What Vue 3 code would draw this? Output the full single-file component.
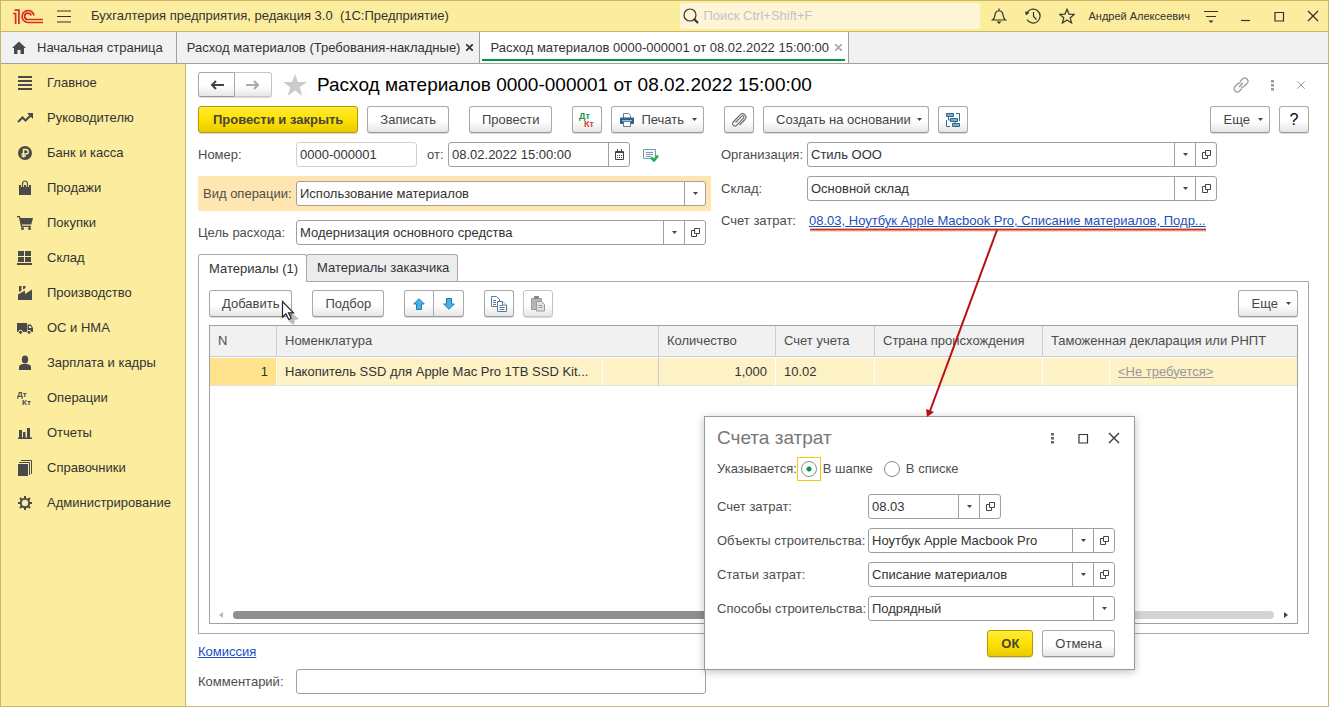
<script setup>
import { ref } from 'vue'

const sections = [
  { icon: 'list', title: 'Главное' },
  { icon: 'trend', title: 'Руководителю' },
  { icon: 'ruble', title: 'Банк и касса' },
  { icon: 'bag', title: 'Продажи' },
  { icon: 'cart', title: 'Покупки' },
  { icon: 'stock', title: 'Склад' },
  { icon: 'factory', title: 'Производство' },
  { icon: 'truck', title: 'ОС и НМА' },
  { icon: 'person', title: 'Зарплата и кадры' },
  { icon: 'dtkt', title: 'Операции' },
  { icon: 'chart', title: 'Отчеты' },
  { icon: 'books', title: 'Справочники' },
  { icon: 'gear', title: 'Администрирование' }
]

const number = ref('0000-000001')
const date = ref('08.02.2022 15:00:00')
const operation = ref('Использование материалов')
const purpose = ref('Модернизация основного средства')
const organization = ref('Стиль ООО')
const warehouse = ref('Основной склад')
const comment = ref('')
const place = ref('header')
const method = ref('Подрядный')

const costFields = ref([
  { id: 'cost-account', label: 'Счет затрат:', value: '08.03', short: true },
  { id: 'cost-object', label: 'Объекты строительства:', value: 'Ноутбук Apple Macbook Pro' },
  { id: 'cost-item', label: 'Статьи затрат:', value: 'Списание материалов' }
])
</script>

<template>
  <div class="window">
    <svg class="sprite" aria-hidden="true">
      <symbol id="i-list" viewBox="0 0 16 16"><path fill="currentColor" d="M1 1h14v2H1zM1 5h14v2H1zM1 9h14v2H1zM1 13h14v2H1z" /></symbol>
      <symbol id="i-trend" viewBox="0 0 16 16"><path fill="none" stroke="currentColor" stroke-width="2" d="M1 12l4.500-4.500L8.500 10.500 14 5" /><path fill="currentColor" d="M10 3h6v6z" /></symbol>
      <symbol id="i-ruble" viewBox="0 0 16 16"><circle cx="8" cy="8" r="7" fill="currentColor" /><path fill="none" stroke="#fbec9e" stroke-width="1.500" d="M6.500 12.500V4.500H9a2.200 2.200 0 0 1 0 4.500H4.500M4.500 11H9" /></symbol>
      <symbol id="i-bag" viewBox="0 0 16 16"><path fill="currentColor" d="M2 5h12v10H2z" /><path fill="none" stroke="#fbec9e" stroke-width="3" d="M5.500 7V4a2.500 3 0 0 1 5 0v3" /><path fill="none" stroke="currentColor" stroke-width="1.200" d="M5.500 7V4a2.500 3 0 0 1 5 0v3" /></symbol>
      <symbol id="i-cart" viewBox="0 0 16 16"><path fill="none" stroke="currentColor" stroke-width="1.300" d="M0 1.700h2.500l2 9.600h9.500" /><path fill="currentColor" d="M3 3h13l-1.700 6.500H4.300z" /><circle cx="5.500" cy="13.500" r="1.500" fill="currentColor" /><circle cx="12.500" cy="13.500" r="1.500" fill="currentColor" /></symbol>
      <symbol id="i-stock" viewBox="0 0 16 16"><path fill="currentColor" d="M1 1h6v5H1zM8 1h6v5H8zM1 7h6v5H1zM8 7h6v5H8zM0 13h15v2H0z" /></symbol>
      <symbol id="i-factory" viewBox="0 0 16 16"><path fill="currentColor" d="M1 15V9.500L8 5.500V9l7-4.500V15zM2 1h2.500v4.500L2 7zM6 1h2.500v2L6 4.500z" /></symbol>
      <symbol id="i-truck" viewBox="0 0 16 16"><path fill="currentColor" d="M0 3h10v9H0zM10.500 4.500H14L16 8v4h-5.500z" /><path fill="#fbec9e" d="M12 6h1.700l1 2H12z" /><g fill="currentColor" stroke="#fbec9e"><circle cx="3.500" cy="12.300" r="2" /><circle cx="12" cy="12.300" r="2" /></g></symbol>
      <symbol id="i-person" viewBox="0 0 16 16"><ellipse cx="8" cy="4.500" rx="3.200" ry="4" fill="currentColor" /><path fill="currentColor" d="M2 15v-3q0-2.500 4-3h4q4 .5 4 3v3z" /></symbol>
      <symbol id="i-chart" viewBox="0 0 16 16"><path fill="currentColor" d="M2 5h3v8H2zM6 7h2.500v6H6zM10 3h3v10h-3zM1 12.500h14V14H1z" /></symbol>
      <symbol id="i-books" viewBox="0 0 16 16"><path fill="currentColor" d="M1 4h10v12H1z" /><path fill="none" stroke="currentColor" d="M2 2.500h10.500V15M4 .5h10.500V14" /></symbol>
      <symbol id="i-gear" viewBox="0 0 16 16"><circle cx="8" cy="8" r="4.200" fill="none" stroke="currentColor" stroke-width="2" /><path fill="none" stroke="currentColor" stroke-width="2" d="M8 1v2.500M8 12.500V15M1 8h2.500M12.500 8H15M3 3l1.700 1.700M11.300 11.300L13 13M13 3l-1.700 1.700M4.700 11.300L3 13" /></symbol>
      <symbol id="i-open" viewBox="0 0 11 11"><path fill="none" stroke="currentColor" d="M4.500 1.500h5v5h-5zM4 3.500H1.500v6h5V7" /></symbol>
      <symbol id="i-caret" viewBox="0 0 5 3"><path fill="currentColor" d="M0 0h5L2.500 3z" /></symbol>
      <symbol id="i-cross" viewBox="0 0 16 16"><path fill="none" stroke="currentColor" stroke-width="1.300" d="M3 3l10 10M13 3L3 13" /></symbol>
      <symbol id="i-square" viewBox="0 0 16 16"><path fill="none" stroke="currentColor" stroke-width="1.200" d="M4 4.500h8.500V13H4z" /></symbol>
      <symbol id="i-dots" viewBox="0 0 16 16"><path fill="currentColor" d="M7 3h3v2.500H7zM7 7h3v2.500H7zM7 11h3v2.500H7z" /></symbol>
      <symbol id="i-arrow" viewBox="0 0 14 12"><path fill="none" stroke="currentColor" stroke-width="2" d="M14 6H2M6 2L2 6l4 4" /></symbol>
      <symbol id="i-blue-arrow" viewBox="0 0 12 12"><path fill="#45b1ec" stroke="#2878ae" d="M6 .7L11.300 6H8.500v5.500h-5V6H.7z" /></symbol>
    </svg>

    <header class="titlebar">
      <svg class="logo" viewBox="0 0 30 15" role="img" aria-label="1С">
        <g fill="none" stroke="#dc2a1e" stroke-width="1.700">
          <path d="M0 4.500h2.600V15M1.500 1.200h4.400V15" />
          <path d="M21 6.500A6 6 0 1 0 14.900 13.500H30" />
          <path d="M18 6.700A3.200 3.200 0 1 0 15 10.500H30" />
        </g>
      </svg>
      <button class="bare" type="button" aria-label="Главное меню">
        <svg class="ic16" viewBox="0 0 16 16"><path stroke="currentColor" stroke-width="1.200" d="M1 3h14M1 8.500h14M1 14h14" /></svg>
      </button>
      <span class="app-name">Бухгалтерия предприятия, редакция 3.0&nbsp; (1С:Предприятие)</span>
      <label class="search">
        <svg class="ic16" viewBox="0 0 16 16"><circle cx="7" cy="7" r="6" fill="none" stroke="#333" stroke-width="1.200" /><path stroke="#333" stroke-width="2.200" d="M11.300 11.300L15 15" /></svg>
        <input type="search" placeholder="Поиск Ctrl+Shift+F" aria-label="Поиск" />
      </label>
      <div class="top-icons">
        <button class="bare" type="button" aria-label="Уведомления"><svg class="ic16" viewBox="0 0 16 16"><path fill="none" stroke="currentColor" stroke-width="1.200" d="M8 .5v2M1.500 12c2.500-1.500 2-4 3-7C5.500 2 10.500 2 11.500 5c1 3 .5 5.500 3 7z" /><path fill="currentColor" d="M5.500 13.500h5L8 16z" /></svg></button>
        <button class="bare" type="button" aria-label="История"><svg class="ic16" viewBox="0 0 16 16"><path fill="none" stroke="currentColor" stroke-width="1.200" d="M1.800 5A7 7 0 1 1 2 11.500M8.500 4v4.500l3 3" /><path fill="currentColor" d="M0 3.500l4.500 1L1 7.500z" /></svg></button>
        <button class="bare" type="button" aria-label="Избранное"><svg class="ic16" viewBox="0 0 16 16"><path fill="none" stroke="currentColor" stroke-width="1.200" d="M8 1.200l2 4.900 5.300.3-4.100 3.400 1.400 5.100L8 12l-4.600 2.900 1.400-5.100L.7 6.400 6 6.100z" /></svg></button>
      </div>
      <span class="user">Андрей Алексеевич</span>
      <div class="win-icons">
        <button class="bare" type="button" aria-label="Настройки"><svg class="ic16" viewBox="0 0 16 16"><path stroke="currentColor" stroke-width="1.200" d="M1 3.500h14M3 8.500h10" /><path fill="currentColor" d="M5.500 12.500h5L8 15z" /></svg></button>
        <button class="bare" type="button" aria-label="Свернуть"><svg class="ic16" viewBox="0 0 16 16"><path stroke="currentColor" stroke-width="1.200" d="M4 12.500h9" /></svg></button>
        <button class="bare" type="button" aria-label="Развернуть"><svg class="ic16"><use href="#i-square" /></svg></button>
        <button class="bare" type="button" aria-label="Закрыть программу"><svg class="ic16"><use href="#i-cross" /></svg></button>
      </div>
    </header>

    <nav class="tabs" aria-label="Открытые окна">
      <a class="tab home" href="#home">
        <svg class="ic14" viewBox="0 0 14 13"><path fill="#4a4a4a" d="M7 .5L14 7h-2v6H8.500V9h-3v4H2V7H0z" /></svg>
        Начальная страница
      </a>
      <div class="tab">
        <a href="#list">Расход материалов (Требования-накладные)</a>
        <button class="bare" type="button" aria-label="Закрыть вкладку"><svg class="ic7" viewBox="0 0 7 7"><path stroke="currentColor" stroke-width="1.700" d="M0 0l7 7M7 0L0 7" /></svg></button>
      </div>
      <div class="tab active">
        <a href="#doc">Расход материалов 0000-000001 от 08.02.2022 15:00:00</a>
        <button class="bare faint" type="button" aria-label="Закрыть вкладку"><svg class="ic7" viewBox="0 0 7 7"><path stroke="currentColor" stroke-width="1.700" d="M0 0l7 7M7 0L0 7" /></svg></button>
      </div>
    </nav>

    <div class="body">
      <aside class="sidebar">
        <a v-for="s in sections" :key="s.icon" :href="'#' + s.icon">
          <svg v-if="s.icon === 'dtkt'" class="ic16" viewBox="0 0 16 16"><g fill="currentColor" font-family="Liberation Sans, Arial, sans-serif" font-size="8" font-weight="700"><text x="0" y="7">Дт</text><text x="5" y="15">Кт</text></g></svg>
          <svg v-else class="ic16"><use :href="'#i-' + s.icon" /></svg>{{ s.title }}
        </a>
      </aside>

      <main class="doc">
        <div class="headline">
          <div class="pair">
            <button class="btn" type="button" aria-label="Назад"><svg class="nav-arrow"><use href="#i-arrow" /></svg></button>
            <button class="btn off" type="button" aria-label="Вперед"><svg class="nav-arrow flip"><use href="#i-arrow" /></svg></button>
          </div>
          <svg class="fav" viewBox="0 0 24 22"><path fill="#cbcbcb" d="M12 0l2.900 8H24l-7.200 5.200L19.400 22 12 16.600 4.600 22l2.600-8.800L0 8h9.100z" /></svg>
          <h1>Расход материалов 0000-000001 от 08.02.2022 15:00:00</h1>
          <div class="doc-icons">
            <button class="bare" type="button" aria-label="Ссылка"><svg class="ic16" viewBox="0 0 16 16"><g fill="none" stroke="currentColor" stroke-width="1.200"><path d="M7 4.500L9.500 2a3 3 0 0 1 4.500 4.500L11 9.500a3 3 0 0 1-3 .5M9 11.500L6.500 14A3 3 0 0 1 2 9.500L5 6.500A3 3 0 0 1 8 6M6 10l4-4" /></g></svg></button>
            <button class="bare" type="button" aria-label="Меню"><svg class="ic16"><use href="#i-dots" /></svg></button>
            <button class="bare" type="button" aria-label="Закрыть"><svg class="ic12"><use href="#i-cross" /></svg></button>
          </div>
        </div>

        <div class="toolbar">
          <button class="btn primary" type="button">Провести и закрыть</button>
          <button class="btn" type="button">Записать</button>
          <button class="btn apart" type="button">Провести</button>
          <button class="btn square apart" type="button" aria-label="Проводки">
            <svg class="ic18" viewBox="0 0 18 18"><g font-family="Liberation Sans, Arial, sans-serif" font-size="9" font-weight="700"><text x="1" y="8" fill="#169448">Дт</text><text x="6" y="16" fill="#e0393c">Кт</text></g></svg>
          </button>
          <button class="btn menu print" type="button">
            <svg class="ic16" viewBox="0 0 16 16"><path fill="#fff" stroke="#5c7e97" d="M4.500 6V1.500h5l2 2V6" /><rect x="1" y="5.500" width="14" height="6.500" rx="1" fill="#2f618e" /><path stroke="#9cc0db" d="M3 8.500h10" /><path fill="#fff" stroke="#5c7e97" d="M4.500 9.500h7v5h-7z" /></svg>
            Печать<svg class="caret"><use href="#i-caret" /></svg>
          </button>
          <button class="btn square apart" type="button" aria-label="Файлы">
            <svg class="ic16" viewBox="0 0 16 16"><path fill="none" stroke="#666" stroke-width="1.100" d="M4.500 10.500l6-6.200a1.300 1.300 0 0 1 2 1.900l-6.700 7A2.300 2.300 0 0 1 2.300 10L9 3a3.300 3.300 0 0 1 5 4.500L8.500 13" /></svg>
          </button>
          <button class="btn menu" type="button">Создать на основании<svg class="caret"><use href="#i-caret" /></svg></button>
          <button class="btn square" type="button" aria-label="Структура подчиненности">
            <svg class="ic16" viewBox="0 0 16 16"><g fill="#7fabc9" stroke="#2f6791"><path d="M1.500 1.500h7v3h-7zM5.500 6.500h7v3h-7zM7.500 11.500h7v3h-7z" /><path fill="none" d="M11 1.500h3.500V9M3.500 5v3H5M10 9.500v2M1.500 8v6.500H5" /></g></svg>
          </button>
          <button class="btn menu push" type="button">Еще<svg class="caret"><use href="#i-caret" /></svg></button>
          <button class="btn square help" type="button" aria-label="Справка">?</button>
        </div>

        <div class="form">
          <div class="col">
            <div class="row">
              <label for="number">Номер:</label>
              <div class="field number"><input id="number" v-model="number" /></div>
              <label class="from" for="date">от:</label>
              <div class="field date">
                <input id="date" v-model="date" />
                <button type="button" aria-label="Календарь"><svg class="ic11" viewBox="0 0 11 11"><path fill="none" stroke="currentColor" d="M1.500 2.500h8v8h-8zM3.500 0v2M7.500 0v2" /><path stroke="currentColor" d="M1 3.500h9" /><path stroke="currentColor" stroke-dasharray="1 1" d="M3 6.500h5M3 8.500h5" /></svg></button>
              </div>
              <svg class="posted" viewBox="0 0 16 14"><path fill="#f4f8fb" stroke="#7d9ab0" d="M.5 1.500h12v9H.5z" /><path stroke="#7d9ab0" d="M3 4.500h7M3 6.500h7M3 8.500h5" /><path fill="none" stroke="#23b14d" stroke-width="2.600" d="M8 9.500l3 3 4-5" /></svg>
            </div>
            <div class="row marked">
              <label for="operation">Вид операции:</label>
              <div class="field">
                <select id="operation" v-model="operation"><option>Использование материалов</option></select>
                <span class="drop"><svg class="caret"><use href="#i-caret" /></svg></span>
              </div>
            </div>
            <div class="row">
              <label for="purpose">Цель расхода:</label>
              <div class="field">
                <input id="purpose" v-model="purpose" />
                <button type="button" aria-label="Выбрать"><svg class="caret"><use href="#i-caret" /></svg></button>
                <button type="button" aria-label="Открыть"><svg class="ic11"><use href="#i-open" /></svg></button>
              </div>
            </div>
          </div>
          <div class="col right">
            <div class="row">
              <label for="organization">Организация:</label>
              <div class="field">
                <input id="organization" v-model="organization" />
                <button type="button" aria-label="Выбрать"><svg class="caret"><use href="#i-caret" /></svg></button>
                <button type="button" aria-label="Открыть"><svg class="ic11"><use href="#i-open" /></svg></button>
              </div>
            </div>
            <div class="row">
              <label for="warehouse">Склад:</label>
              <div class="field">
                <input id="warehouse" v-model="warehouse" />
                <button type="button" aria-label="Выбрать"><svg class="caret"><use href="#i-caret" /></svg></button>
                <button type="button" aria-label="Открыть"><svg class="ic11"><use href="#i-open" /></svg></button>
              </div>
            </div>
            <div class="row line">
              <span class="caption">Счет затрат:</span>
              <a class="link" href="#costs">08.03, Ноутбук Apple Macbook Pro, Списание материалов, Подр...</a>
              <svg class="callout" viewBox="0 0 398 190">
                <path stroke="#efb3a6" stroke-width="3" d="M1 3h396" /><path stroke="#c4351f" stroke-width="1.500" d="M1 2.500h396" />
                <path stroke="#b90f12" stroke-width="2" d="M188 3L121 184" /><path fill="#b90f12" d="M117 182l8 3-7 5z" />
              </svg>
            </div>
          </div>
        </div>

        <div class="pages">
          <button class="page on" type="button">Материалы (1)</button>
          <button class="page" type="button">Материалы заказчика</button>
        </div>
        <section class="panel">
          <div class="toolbar inner">
            <button class="btn add" type="button">Добавить
              <svg class="cursor" viewBox="0 0 20 26"><path fill="#000" opacity=".25" d="M6 9l12 10-4 1-1 5-5-3z" /><path fill="#fff" stroke="#20242c" stroke-width="1.200" d="M1.500 1.500v15.500l3.500-3.300 2.700 5.800 2.500-1.200-2.700-5.500h5z" /></svg>
            </button>
            <button class="btn apart" type="button">Подбор</button>
            <div class="pair apart">
              <button class="btn" type="button" aria-label="Вверх"><svg class="ic12"><use href="#i-blue-arrow" /></svg></button>
              <button class="btn" type="button" aria-label="Вниз"><svg class="ic12 down"><use href="#i-blue-arrow" /></svg></button>
            </div>
            <button class="btn square apart" type="button" aria-label="Копировать">
              <svg class="ic16" viewBox="0 0 16 16"><g fill="#fff" stroke="#587a96"><path d="M.5.500h5l3 3v7h-8z" /><path d="M6.500 5.500h5l4 3.500v6.500h-9z" /><path d="M2 4.500h3M2 6.500h3M2 8.500h3M8.500 9.500h3M8.500 11.500h5M8.500 13.500h5M11.500 5.500V9h4" /></g></svg>
            </button>
            <button class="btn square off" type="button" aria-label="Вставить" disabled>
              <svg class="ic16" viewBox="0 0 16 16"><path fill="#b5b5b5" stroke="#9a9a9a" d="M1.500 2.500h10v11h-10z" /><path fill="#888" d="M4 0h5v3H4z" /><path fill="#e2e2e2" stroke="#9a9a9a" d="M6.500 5.500h5l3 3v6.500h-8z" /><path stroke="#9a9a9a" d="M8.500 9.500h4M8.500 11.500h4" /></svg>
            </button>
            <button class="btn menu push" type="button">Еще<svg class="caret"><use href="#i-caret" /></svg></button>
          </div>

          <div class="grid">
            <table>
              <colgroup><col class="c-n" /><col class="c-item" /><col class="c-extra" /><col class="c-qty" /><col class="c-acc" /><col class="c-country" /><col class="c-code" /><col /></colgroup>
              <thead>
                <tr><th>N</th><th colspan="2">Номенклатура</th><th>Количество</th><th>Счет учета</th><th>Страна происхождения</th><th colspan="2">Таможенная декларация или РНПТ</th></tr>
              </thead>
              <tbody>
                <tr><td class="num current">1</td><td>Накопитель SSD для Apple Mac Pro 1TB SSD Kit...</td><td class="edge"></td><td class="num">1,000</td><td>10.02</td><td></td><td></td><td><a class="soft" href="#declaration">&lt;Не требуется&gt;</a></td></tr>
              </tbody>
            </table>
            <div class="scroll">
              <svg class="tri" viewBox="0 0 4 6"><path fill="#b5b5b5" d="M4 0v6L0 3z" /></svg>
              <div class="track"><div class="thumb"></div></div>
              <svg class="tri" viewBox="0 0 4 6"><path fill="#444" d="M0 0v6l4-3z" /></svg>
            </div>
          </div>
        </section>

        <div class="below"><a class="link" href="#commission">Комиссия</a></div>
        <div class="row comment">
          <label for="comment">Комментарий:</label>
          <div class="field"><input id="comment" v-model="comment" /></div>
        </div>
      </main>
    </div>

    <div class="dialog" role="dialog" aria-labelledby="dialog-title">
      <div class="dialog-head">
        <h2 id="dialog-title">Счета затрат</h2>
        <button class="bare grey" type="button" aria-label="Меню"><svg class="ic16"><use href="#i-dots" /></svg></button>
        <button class="bare" type="button" aria-label="Развернуть"><svg class="ic16"><use href="#i-square" /></svg></button>
        <button class="bare" type="button" aria-label="Закрыть"><svg class="ic16"><use href="#i-cross" /></svg></button>
      </div>
      <div class="choice" role="radiogroup" aria-label="Указывается">
        <span>Указывается:</span>
        <label><span class="ring" :class="{ focus: place === 'header' }"><input v-model="place" type="radio" name="place" value="header" /></span>В шапке</label>
        <label><span class="ring" :class="{ focus: place === 'list' }"><input v-model="place" type="radio" name="place" value="list" /></span>В списке</label>
      </div>
      <div class="costs">
        <div v-for="f in costFields" :key="f.id" class="row">
          <label :for="f.id">{{ f.label }}</label>
          <div class="field" :class="{ short: f.short }">
            <input :id="f.id" v-model="f.value" />
            <button type="button" aria-label="Выбрать"><svg class="caret"><use href="#i-caret" /></svg></button>
            <button type="button" aria-label="Открыть"><svg class="ic11"><use href="#i-open" /></svg></button>
          </div>
        </div>
        <div class="row">
          <label for="method">Способы строительства:</label>
          <div class="field">
            <select id="method" v-model="method"><option>Подрядный</option></select>
            <span class="drop"><svg class="caret"><use href="#i-caret" /></svg></span>
          </div>
        </div>
      </div>
      <div class="actions">
        <button class="btn primary" type="button">ОК</button>
        <button class="btn" type="button">Отмена</button>
      </div>
    </div>
  </div>
</template>

<style>
body {
  margin: 0;
}
</style>

<style scoped>
.window,
.window * {
  box-sizing: border-box;
}
.window {
  position: relative;
  display: flex;
  flex-direction: column;
  min-height: 100vh;
  border: 1px solid #c8b766;
  background: #fff;
  color: #333;
  font: 13px/16px "Liberation Sans", Arial, sans-serif;
}
.sprite {
  position: absolute;
  width: 0;
  height: 0;
}
button,
input,
select {
  font: inherit;
  color: inherit;
}
a {
  color: inherit;
  text-decoration: none;
}
svg {
  display: block;
  flex: none;
}
.ic7 { width: 7px; height: 7px; }
.ic11 { width: 11px; height: 11px; }
.ic12 { width: 12px; height: 12px; }
.ic14 { width: 14px; height: 13px; }
.ic16 { width: 16px; height: 16px; }
.ic18 { width: 18px; height: 18px; }
.caret { width: 5px; height: 3px; }
.bare {
  display: flex;
  padding: 0;
  border: 0;
  background: none;
}

.titlebar {
  display: flex;
  align-items: center;
  height: 31px;
  padding: 0 7px 0 12px;
  border-bottom: 1px solid #c8b766;
  background: #fbec9e;
}
.logo {
  width: 30px;
  height: 15px;
  margin-right: 13px;
}
.app-name {
  flex: 1;
  margin-left: 19px;
  white-space: nowrap;
}
.search {
  display: flex;
  align-items: center;
  gap: 4px;
  width: 300px;
  height: 26px;
  padding: 0 3px;
  border-radius: 3px;
  background: #fdf5d6;
}
.search input {
  flex: 1;
  min-width: 0;
  padding: 0;
  border: 0;
  outline: 0;
  background: none;
}
.search input::placeholder {
  color: #c4c3bd;
}
.top-icons {
  display: flex;
  gap: 18px;
  margin: 0 13px 0 11px;
}
.user {
  font-size: 11px;
  white-space: nowrap;
}
.win-icons {
  display: flex;
  gap: 18px;
  margin-left: 13px;
}

.tabs {
  display: flex;
  height: 32px;
  border-bottom: 1px solid #a0a0a0;
  background: #f1f1f1;
}
.tab {
  display: flex;
  align-items: center;
  gap: 6px;
  padding: 0 6px 0 10px;
  border-right: 1px solid #a0a0a0;
  white-space: nowrap;
}
.home {
  gap: 11px;
  padding: 0 13px 0 11px;
}
.active {
  background: linear-gradient(#009646, #009646) 2px 27px / calc(100% - 5px) 2px no-repeat #fff;
}
.faint {
  color: #aaa;
}

.body {
  display: flex;
  flex: 1;
}
.sidebar {
  flex: none;
  width: 185px;
  padding-top: 1px;
  border-right: 1px solid #c8b766;
  background: #fbec9e;
}
.sidebar a {
  display: flex;
  align-items: center;
  gap: 14px;
  height: 35px;
  padding-left: 16px;
}
.sidebar svg {
  color: #4a4a4a;
}

.doc {
  display: flex;
  flex: 1;
  flex-direction: column;
  min-width: 0;
  padding: 8px 19px 12px 12px;
}
.headline {
  display: flex;
  align-items: center;
  height: 25px;
}
.pair {
  display: flex;
}
.pair .btn {
  justify-content: center;
  width: 30px;
  padding: 0;
}
.pair .btn:first-child {
  border-radius: 3px 0 0 3px;
}
.pair .btn:last-child {
  margin-left: 0;
  border-left: 0;
  border-radius: 0 3px 3px 0;
}
.headline .btn {
  width: 37px;
  height: 25px;
}
.nav-arrow {
  width: 14px;
  height: 12px;
}
.flip {
  transform: scaleX(-1);
  color: #aaa;
}
.down {
  transform: scaleY(-1);
}
.fav {
  width: 24px;
  height: 22px;
  margin: 0 10px 0 11px;
}
h1 {
  flex: 1;
  margin: 0;
  color: #000;
  font-size: 19px;
  font-weight: 400;
  line-height: 24px;
  white-space: nowrap;
}
.doc-icons {
  display: flex;
  align-items: center;
  gap: 15px;
  margin-right: 2px;
  color: #999;
}

.toolbar {
  display: flex;
  gap: 9px;
  margin-top: 9px;
}
.btn {
  display: flex;
  align-items: center;
  height: 27px;
  padding: 0 12px;
  border: 1px solid #a9a9a9;
  border-bottom-color: #989898;
  border-radius: 3px;
  background: linear-gradient(#fff 55%, #e6e6e6);
  box-shadow: 0 1px 1px rgba(0, 0, 0, 0.15);
  color: #444;
  white-space: nowrap;
}
.primary {
  padding: 0 13px;
  border-color: #b09c00;
  background: linear-gradient(#ffeb3a, #ffe100 50%, #e8cc00);
  font-weight: 700;
}
.toolbar .primary {
  padding: 0 14px;
}
.square {
  justify-content: center;
  width: 30px;
  padding: 0;
}
.menu {
  gap: 6px;
  padding-right: 6px;
}
.print {
  padding-left: 7px;
}
.print .caret {
  margin-left: 2px;
}
.apart {
  margin-left: 11px;
}
.push {
  gap: 8px;
  margin-left: auto;
  padding-left: 13px;
}
.help {
  color: #000;
  font-size: 16px;
}
.off {
  border-color: #c4c4c4;
}

.form {
  display: flex;
  gap: 10px;
  margin: 9px 0;
}
.col {
  display: flex;
  flex-direction: column;
  gap: 9px;
  width: 513px;
}
.right {
  width: 496px;
}
.row {
  display: flex;
  align-items: center;
  padding-right: 5px;
  color: #4d4d4d;
}
.right .row {
  padding: 0;
}
.row > label,
.caption {
  flex: none;
  width: 98px;
  white-space: nowrap;
}
.right .row > label,
.right .caption {
  width: 86px;
}
.row > .from {
  width: 31px;
  padding-left: 10px;
}
.marked {
  padding: 5px;
  background: #ffe6b0;
}
.marked > label {
  width: 93px;
}
.field {
  position: relative;
  display: flex;
  flex: 1;
  min-width: 0;
  height: 25px;
  border: 1px solid #a0a0a0;
  border-radius: 3px;
  background: #fff;
  color: #333;
}
.field input,
.field select {
  flex: 1;
  min-width: 0;
  padding: 0 3px;
  border: 0;
  outline: 0;
  background: none;
  appearance: none;
}
.field button,
.drop {
  display: flex;
  flex: none;
  align-items: center;
  justify-content: center;
  width: 21px;
  padding: 0;
  border: 0;
  border-left: 1px solid #a0a0a0;
  background: none;
  color: #444;
}
.drop {
  pointer-events: none;
}
.number {
  flex: none;
  width: 121px;
  border-color: #d0d0d0;
}
.date {
  flex: none;
  width: 182px;
}
.posted {
  width: 16px;
  height: 14px;
  margin-left: 13px;
}
.line {
  position: relative;
  height: 22px;
}
.link {
  color: #1a50c0;
  text-decoration: underline;
  white-space: nowrap;
}
.line .link {
  padding-left: 2px;
}
.callout {
  position: absolute;
  z-index: 2;
  top: 17px;
  left: 88px;
  width: 398px;
  height: 190px;
  pointer-events: none;
}

.pages {
  display: flex;
}
.page {
  height: 27px;
  padding: 0 8px 0 10px;
  border: 1px solid #a9a9a9;
  border-bottom: 0;
  border-radius: 3px 3px 0 0;
  background: #ececec;
}
.page + .page {
  margin-left: -1px;
}
.on {
  position: relative;
  height: 28px;
  margin-bottom: -1px;
  background: #fff;
}
.panel {
  display: flex;
  flex: 1;
  flex-direction: column;
  padding: 0 10px 9px;
  border: 1px solid #a9a9a9;
}
.inner {
  margin: 8px 0;
}
.add {
  position: relative;
}
.cursor {
  position: absolute;
  top: 9px;
  left: 71px;
  width: 20px;
  height: 26px;
}
.grid {
  display: flex;
  flex: 1;
  flex-direction: column;
  justify-content: space-between;
  border: 1px solid #a0a0a0;
}
table {
  width: 100%;
  border-collapse: separate;
  border-spacing: 0;
  table-layout: fixed;
}
.c-n { width: 67px; }
.c-item { width: 326px; }
.c-extra { width: 56px; }
.c-qty { width: 117px; }
.c-acc { width: 99px; }
.c-country { width: 168px; }
.c-code { width: 67px; }
th,
td {
  overflow: hidden;
  padding: 0 8px;
  text-align: left;
  font-weight: 400;
  white-space: nowrap;
}
th {
  height: 31px;
  border-right: 1px solid #ccc;
  border-bottom: 1px solid #ccc;
  background: #f1f1f1;
  color: #4d4d4d;
}
td {
  height: 29px;
  border-top: 1px solid #fff;
  border-right: 1px solid #fff;
  border-bottom: 1px solid #e2e2e2;
  background: #fdf1c6;
}
th:last-child,
td:last-child {
  border-right: 0;
}
.edge {
  border-right-color: #ccc;
}
.num {
  text-align: right;
}
.current {
  background: #ffe38c;
}
.soft {
  color: #999;
  text-decoration: underline;
}
.scroll {
  display: flex;
  align-items: center;
  gap: 10px;
  height: 16px;
  padding: 0 9px;
}
.tri {
  width: 4px;
  height: 6px;
}
.track {
  flex: 1;
  height: 8px;
  border-radius: 4px;
  background: #d4d4d4;
}
.thumb {
  width: 70%;
  height: 8px;
  border-radius: 4px;
  background: #8f8f8f;
}
.below {
  margin: 10px 0 9px;
}
.comment {
  width: 513px;
}

.dialog {
  position: absolute;
  z-index: 1;
  top: 415px;
  left: 703px;
  width: 431px;
  padding: 9px 19px 12px 12px;
  border: 1px solid #999;
  background: #fff;
  box-shadow: 0 2px 8px rgba(0, 0, 0, 0.25);
}
.dialog-head {
  display: flex;
  align-items: center;
  gap: 15px;
  height: 24px;
  margin-right: -7px;
}
h2 {
  flex: 1;
  margin: 0;
  color: #777;
  font-size: 19px;
  font-weight: 400;
}
.grey {
  color: #666;
}
.choice {
  display: flex;
  align-items: center;
  height: 24px;
  margin: 7px 0 13px;
  color: #4d4d4d;
  white-space: nowrap;
}
.choice label {
  display: flex;
  align-items: center;
  gap: 2px;
  margin-right: 7px;
}
.ring {
  display: flex;
  padding: 3px;
  border: 1px solid transparent;
}
.focus {
  border-color: #f5c518;
}
.ring input {
  width: 16px;
  height: 16px;
  margin: 0;
  border: 1px solid #8c8c8c;
  border-radius: 50%;
  appearance: none;
}
.ring input:checked {
  background: radial-gradient(circle, #009646 2px, transparent 3px);
}
.costs {
  display: flex;
  flex-direction: column;
  gap: 9px;
}
.costs .row {
  padding: 0;
}
.costs .row > label {
  width: 151px;
}
.costs .short {
  flex: none;
  width: 133px;
}
.actions {
  display: flex;
  justify-content: flex-end;
  gap: 9px;
  margin-top: 9px;
}
</style>
